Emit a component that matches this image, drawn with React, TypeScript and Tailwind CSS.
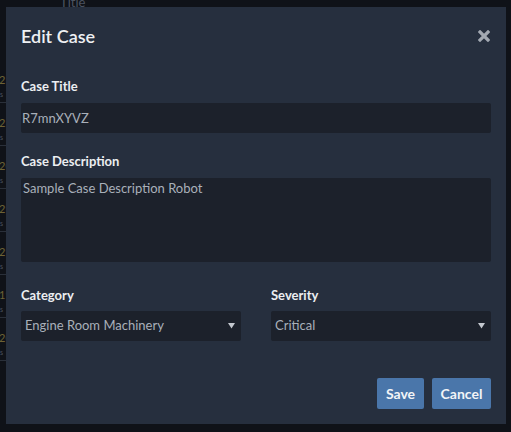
import { useState } from 'react';

const categories = ['Engine Room Machinery', 'Deck Equipment', 'Navigation', 'Safety Systems'];
const severities = ['Critical', 'High', 'Medium', 'Low'];

function Caret() {
  return (
    <svg width="7" height="6" viewBox="0 0 7 6" className="pointer-events-none absolute right-[6px] top-[12px]">
      <path d="M0 0 H7 L3.5 5.5 Z" fill="#c4c8cf" />
    </svg>
  );
}

export default function App() {
  const [title, setTitle] = useState('R7mnXYVZ');
  const [description, setDescription] = useState('Sample Case Description Robot');
  const [category, setCategory] = useState(categories[0]);
  const [severity, setSeverity] = useState(severities[0]);

  return (
    <div className="relative w-[511px] h-[432px] overflow-hidden bg-[#0f1218] font-['Lato','Liberation_Sans',sans-serif]">
      {/* page behind the overlay */}
      <div className="absolute left-[60px] top-[-6px] text-[13px] leading-[16px] text-[#4b5260]">Title</div>
      <div className="absolute left-0 top-[74px] flex flex-col gap-[14px]">
        {['21', '22', '20', '29', '29', '19', '20'].map((n, i) => (
          <div key={i} className="flex flex-col gap-[4px]">
            <span className="text-[11px] leading-[12px] text-[#6d6235] -ml-[1px]">{n}</span>
            <span className="text-[7px] leading-[8px] text-[#4b5260]">s</span>
            <span className="h-px w-[6px] bg-[#2a303a]" />
          </div>
        ))}
      </div>

      {/* modal */}
      <div className="absolute left-[6px] top-[7px] w-[500px] h-[417px] bg-[#262f3e] px-[15px] pt-[16px]">
        <div className="flex items-center justify-between h-[26px]">
          <h2 className="text-[18px] font-semibold text-[#eef0f3] leading-[26px]">Edit Case</h2>
          <button type="button" className="mr-[1px] text-[#a3a9b2]" aria-label="Close">
            <svg width="12" height="12" viewBox="0 0 12 12">
              <path d="M2 2 L10 10 M10 2 L2 10" stroke="currentColor" strokeWidth="3.2" strokeLinecap="square" />
            </svg>
          </button>
        </div>

        <label className="block mt-[28px] mb-[8px] text-[13px] font-bold leading-[18px] text-[#eceef1]">Case Title</label>
        <input
          value={title}
          onChange={(e) => setTitle(e.target.value)}
          className="block w-full h-[30px] rounded-[2px] bg-[#1c212b] px-[1px] text-[13px] text-[#a9b0ba] outline-none"
        />

        <label className="block mt-[19px] mb-[8px] text-[13px] font-bold leading-[18px] text-[#eceef1]">Case Description</label>
        <textarea
          value={description}
          onChange={(e) => setDescription(e.target.value)}
          className="block w-full h-[84px] resize-none rounded-[2px] bg-[#1c212b] px-[2px] pt-[2px] text-[13px] leading-[16px] text-[#a9b0ba] outline-none"
        />

        <div className="mt-[24px] grid grid-cols-2 gap-[30px]">
          <div>
            <label className="block mb-[7px] text-[13px] font-bold leading-[18px] text-[#eceef1]">Category</label>
            <div className="relative">
              <select
                value={category}
                onChange={(e) => setCategory(e.target.value)}
                className="block w-full h-[30px] appearance-none rounded-[2px] bg-[#1c212b] px-[4px] text-[13px] text-[#a9b0ba] outline-none"
              >
                {categories.map((c) => (
                  <option key={c}>{c}</option>
                ))}
              </select>
              <Caret />
            </div>
          </div>
          <div>
            <label className="block mb-[7px] text-[13px] font-bold leading-[18px] text-[#eceef1]">Severity</label>
            <div className="relative">
              <select
                value={severity}
                onChange={(e) => setSeverity(e.target.value)}
                className="block w-full h-[30px] appearance-none rounded-[2px] bg-[#1c212b] px-[4px] text-[13px] text-[#a9b0ba] outline-none"
              >
                {severities.map((s) => (
                  <option key={s}>{s}</option>
                ))}
              </select>
              <Caret />
            </div>
          </div>
        </div>

        <div className="mt-[37px] flex justify-end gap-[8px]">
          <button type="button" className="h-[31px] w-[47px] rounded-[2px] bg-[#4a76aa] text-[14px] font-bold text-[#f2f4f7]">
            Save
          </button>
          <button type="button" className="h-[31px] w-[59px] rounded-[2px] bg-[#4a76aa] text-[14px] font-bold text-[#f2f4f7]">
            Cancel
          </button>
        </div>
      </div>
    </div>
  );
}
